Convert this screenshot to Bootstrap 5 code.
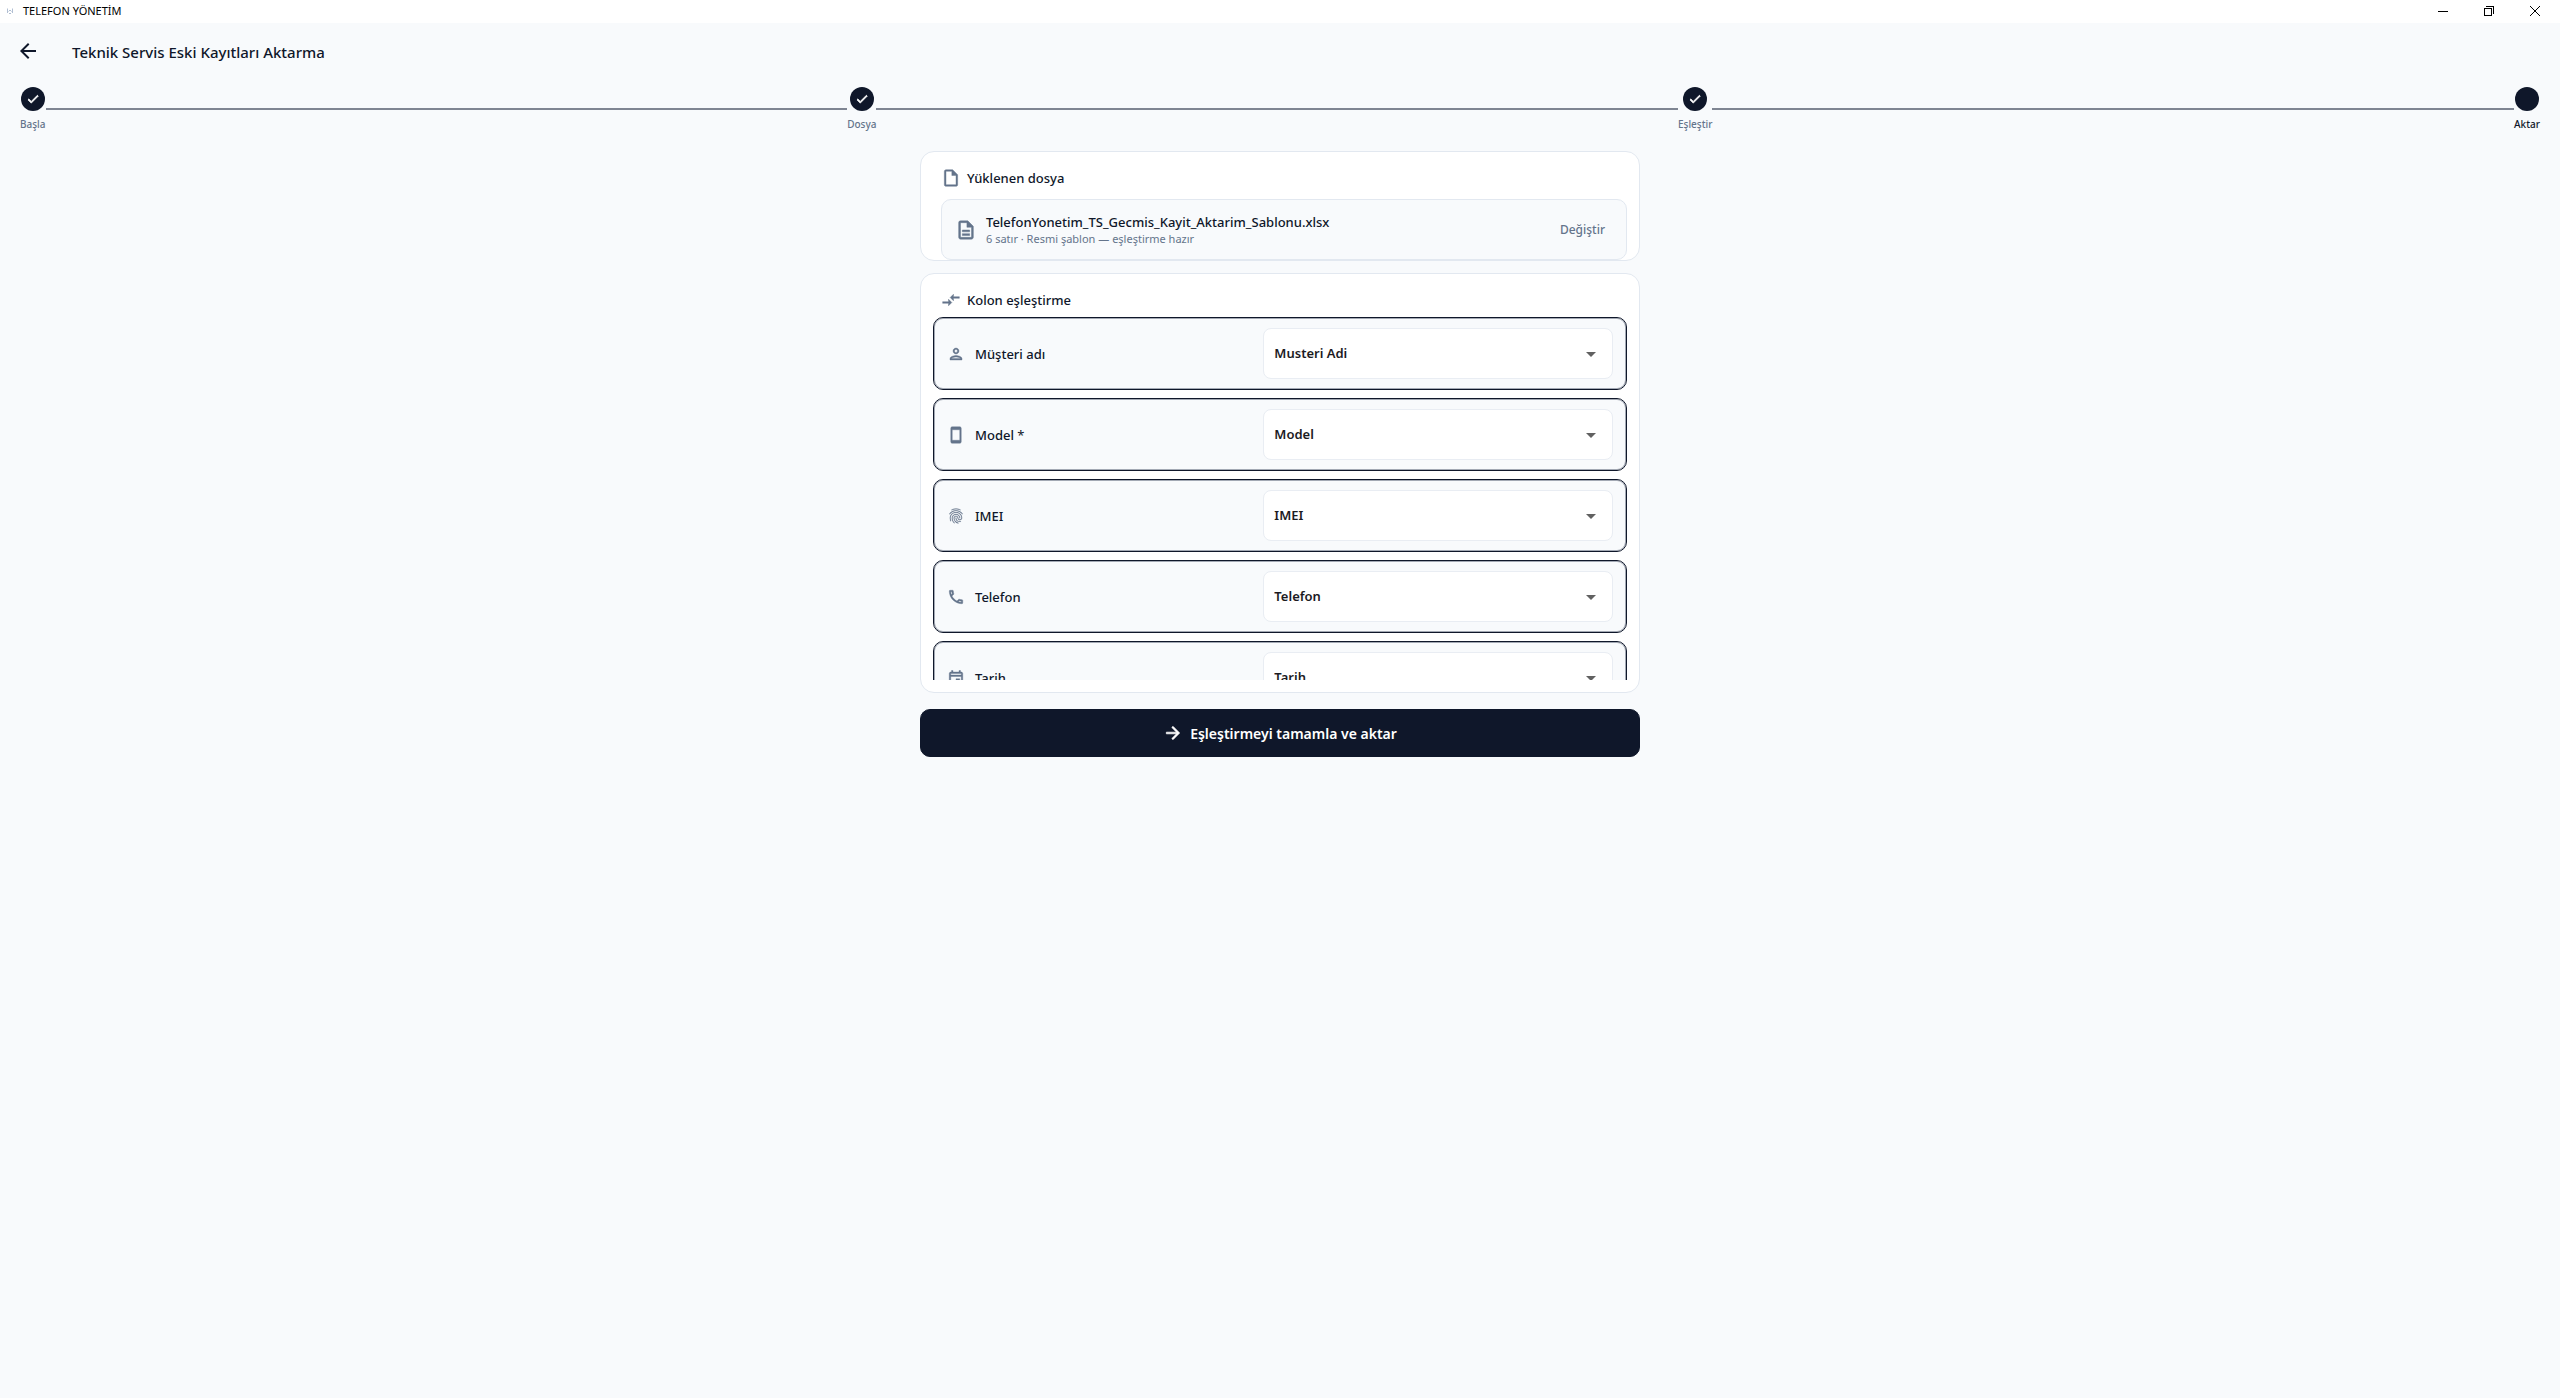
<!DOCTYPE html>
<html lang="tr">
<head>
<meta charset="utf-8">
<meta name="viewport" content="width=device-width, initial-scale=1">
<title>TELEFON YÖNETİM</title>
<link href="https://cdn.jsdelivr.net/npm/bootstrap@5.3.0/dist/css/bootstrap.min.css" rel="stylesheet">
<style>
  :root { --ink: #0f172a; --muted: #64748b; --line: #e2e8f0; --paper: #f8fafc; }
  body { background: var(--paper); color: var(--ink); font-family: "Noto Sans", "Open Sans", sans-serif; font-size: 13px; line-height: 20px; }
  svg { display: block; flex: none; fill: currentColor; }
  .window-bar { height: 23px; background: #fff; color: #000; font-size: 11px; line-height: 22px; padding: 0 2px 1px 7px; }
  .window-bar button { width: 46px; height: 21px; }
  .window-name { margin-left: 10px; }
  .app-mark { fill: none; stroke: #8fa3c0; }
  .plain-btn { border: 0; background: none; padding: 0; color: inherit; display: flex; align-items: center; justify-content: center; }
  .page-head { height: 56px; padding: 0 16px; gap: 32px; }
  .page-head h1 { font-size: 15px; line-height: 24px; font-weight: 500; margin: 0; padding-top: 2px; }
  .stepper { padding: 8px 20px 20px; }
  .step { font-size: 10px; line-height: 14px; font-weight: 500; gap: 6px; color: var(--muted); }
  .step.current { color: var(--ink); }
  .step-dot { width: 24px; height: 24px; border-radius: 50%; background: var(--ink); color: #fff; }
  .step-line { height: 2px; background: #7f8592; }
  .wizard { max-width: 720px; }
  .panel { background: #fff; border: 1px solid var(--line); border-radius: 14px; padding: 0 12px; }
  .panel + .panel { margin-top: 12px; }
  .panel h2 { font-size: 13px; line-height: 20px; font-weight: 500; margin: 0; }
  .panel-head { padding: 16px 0 0 8px; gap: 6px; }
  .panel-head svg, .file-box svg, .map-row svg { color: var(--muted); stroke: currentColor; stroke-width: .5px; }
  .map-row .fine-icon { stroke-width: .2px; }
  .file-box { margin: 11px 0 0 8px; padding: 0 21px 0 13px; height: 61px; border: 1px solid var(--line); border-radius: 10px; background: var(--paper); gap: 9px; }
  .file-name { font-weight: 500; line-height: 18px; }
  .file-note { font-size: 11px; line-height: 16px; color: var(--muted); }
  .file-box button { font-size: 12px; font-weight: 500; color: var(--muted); }
  .map-list { margin: 7px 0 12px; height: 363px; overflow: hidden; gap: 8px; }
  .map-row { flex: none; height: 73px; padding: 0 13px; border: 1px solid var(--ink); border-radius: 10px; background: var(--paper); box-shadow: inset 0 0 0 1px #a3a9b4; }
  .map-row label { margin-left: 10px; font-weight: 500; }
  .map-row .form-select { width: 52.5%; height: 51px; margin-left: auto; padding: 0 36px 0 10px; border: 1px solid #e9edf3; border-radius: 8px; color: #1c1b1f; font-size: 13px; font-weight: 600; background-color: #fff; background-position: right 9px center; background-size: 24px 24px;
    background-image: url("data:image/svg+xml,%3Csvg xmlns='http://www.w3.org/2000/svg' viewBox='0 0 24 24'%3E%3Cpath fill='%23616161' d='M7 10l5 5 5-5z'/%3E%3C/svg%3E"); }
  .go-btn { --bs-btn-bg: var(--ink); --bs-btn-border-color: var(--ink); --bs-btn-hover-bg: #1e293b; --bs-btn-color: #fff; --bs-btn-hover-color: #fff; height: 48px; border-radius: 10px; font-size: 14px; font-weight: 600; gap: 7px; }
</style>
</head>
<body>
<div class="window-bar d-flex align-items-center">
  <svg class="app-mark" width="6" height="6" viewBox="0 0 6 6" aria-hidden="true"><path d="M.5 .5v4.500M5.500 .5v4.500M1.500 3.500L3 2l1.500 1.500M2 5.500h2" stroke-width=".7"/></svg>
  <span class="window-name me-auto">TELEFON YÖNETİM</span>
  <button class="plain-btn" aria-label="Küçült"><svg width="10" height="10" viewBox="0 0 10 10"><path d="M0 5h10v1H0z"/></svg></button>
  <button class="plain-btn" aria-label="Geri yükle"><svg width="10" height="10" viewBox="0 0 10 10"><path d="M0 2h8v8H0zM1 3v6h6V3zM2 0h8v8H9V1H2z" fill-rule="evenodd"/></svg></button>
  <button class="plain-btn" aria-label="Kapat"><svg width="10" height="10" viewBox="0 0 10 10"><path d="M0 0l10 10M10 0L0 10" stroke="#000"/></svg></button>
</div>

<header class="page-head d-flex align-items-center">
  <button class="plain-btn" aria-label="Geri"><svg width="24" height="24" viewBox="0 0 24 24"><path d="M20 11H7.830l5.590-5.590L12 4l-8 8 8 8 1.410-1.410L7.830 13H20z"/></svg></button>
  <h1>Teknik Servis Eski Kayıtları Aktarma</h1>
</header>

<div class="stepper d-flex align-items-center">
  <div class="step d-flex flex-column align-items-center"><span class="step-dot d-flex align-items-center justify-content-center"><svg width="14" height="14" viewBox="0 0 24 24"><path d="M9 16.200L4.800 12l-1.400 1.400L9 19 21 7l-1.400-1.400z" stroke="#fff" stroke-width="1.500"/></svg></span>Başla</div>
  <div class="step-line flex-fill"></div>
  <div class="step d-flex flex-column align-items-center"><span class="step-dot d-flex align-items-center justify-content-center"><svg width="14" height="14" viewBox="0 0 24 24"><path d="M9 16.200L4.800 12l-1.400 1.400L9 19 21 7l-1.400-1.400z" stroke="#fff" stroke-width="1.500"/></svg></span>Dosya</div>
  <div class="step-line flex-fill"></div>
  <div class="step d-flex flex-column align-items-center"><span class="step-dot d-flex align-items-center justify-content-center"><svg width="14" height="14" viewBox="0 0 24 24"><path d="M9 16.200L4.800 12l-1.400 1.400L9 19 21 7l-1.400-1.400z" stroke="#fff" stroke-width="1.500"/></svg></span>Eşleştir</div>
  <div class="step-line flex-fill"></div>
  <div class="step current d-flex flex-column align-items-center"><span class="step-dot"></span>Aktar</div>
</div>

<main class="wizard mx-auto">
  <section class="panel">
    <div class="panel-head d-flex align-items-center">
      <svg width="20" height="20" viewBox="0 0 24 24"><path d="M14 2H6c-1.100 0-2 .9-2 2v16c0 1.100.9 2 2 2h12c1.100 0 2-.9 2-2V8zM6 20V4h7v5h5v11z"/></svg>
      <h2>Yüklenen dosya</h2>
    </div>
    <div class="file-box d-flex align-items-center">
      <svg width="22" height="22" viewBox="0 0 24 24"><path d="M8 16h8v2H8zm0-4h8v2H8zm6-10H6c-1.100 0-2 .9-2 2v16c0 1.100.9 2 2 2h12c1.100 0 2-.9 2-2V8zm4 18H6V4h7v5h5z"/></svg>
      <div class="me-auto">
        <div class="file-name">TelefonYonetim_TS_Gecmis_Kayit_Aktarim_Sablonu.xlsx</div>
        <div class="file-note">6 satır · Resmi şablon — eşleştirme hazır</div>
      </div>
      <button class="plain-btn">Değiştir</button>
    </div>
  </section>

  <section class="panel">
    <div class="panel-head d-flex align-items-center">
      <svg width="20" height="20" viewBox="0 0 24 24"><path d="M9.010 14H2v2h7.010v3L13 15l-3.990-4zm5.980-1v-3H22V8h-7.010V5L11 9z"/></svg>
      <h2>Kolon eşleştirme</h2>
    </div>
    <div class="map-list d-flex flex-column">
      <div class="map-row d-flex align-items-center">
        <svg width="18" height="18" viewBox="0 0 24 24"><path d="M12 6c1.100 0 2 .9 2 2s-.9 2-2 2-2-.9-2-2 .9-2 2-2m0 10c2.700 0 5.800 1.290 6 2H6c.23-.72 3.310-2 6-2m0-12C9.790 4 8 5.790 8 8s1.790 4 4 4 4-1.790 4-4-1.790-4-4-4zm0 10c-2.670 0-8 1.340-8 4v2h16v-2c0-2.660-5.330-4-8-4z"/></svg>
        <label for="m1">Müşteri adı</label>
        <select class="form-select" id="m1"><option>Musteri Adi</option></select>
      </div>
      <div class="map-row d-flex align-items-center">
        <svg width="18" height="18" viewBox="0 0 24 24"><path d="M17 1.010L7 1c-1.100 0-2 .9-2 2v18c0 1.100.9 2 2 2h10c1.100 0 2-.9 2-2V3c0-1.100-.9-1.990-2-1.990zM17 19H7V5h10z"/></svg>
        <label for="m2">Model <span class="fw-normal">*</span></label>
        <select class="form-select" id="m2"><option>Model</option></select>
      </div>
      <div class="map-row d-flex align-items-center">
        <svg class="fine-icon" width="18" height="18" viewBox="0 0 24 24"><path d="M17.810 4.470c-.08 0-.16-.02-.23-.06C15.660 3.420 14 3 12.010 3c-1.980 0-3.860.47-5.570 1.410-.24.13-.54.04-.68-.2-.13-.24-.04-.55.2-.68C7.820 2.520 9.860 2 12.010 2c2.130 0 3.990.47 6.030 1.520.25.13.34.43.21.67-.09.18-.26.28-.44.28zM3.500 9.720c-.1 0-.2-.03-.29-.09-.23-.16-.28-.47-.12-.7.99-1.400 2.250-2.500 3.750-3.270C9.980 4.040 14 4.030 17.150 5.650c1.500.77 2.760 1.860 3.750 3.250.16.22.11.54-.12.7-.23.16-.54.11-.7-.12-.9-1.260-2.040-2.250-3.390-2.940-2.870-1.470-6.540-1.470-9.400.01-1.360.7-2.500 1.700-3.400 2.960-.08.14-.23.21-.39.21zm6.250 12.070c-.13 0-.26-.05-.35-.15-.87-.87-1.340-1.430-2.010-2.640-.69-1.230-1.050-2.730-1.050-4.340 0-2.970 2.540-5.390 5.660-5.390s5.660 2.420 5.660 5.390c0 .28-.22.5-.5.5s-.5-.22-.5-.5c0-2.420-2.090-4.390-4.660-4.390-2.570 0-4.660 1.970-4.660 4.390 0 1.440.32 2.770.93 3.850.64 1.150 1.080 1.640 1.850 2.420.19.2.19.51 0 .71-.11.1-.24.15-.37.15zm7.170-1.850c-1.190 0-2.240-.3-3.100-.89-1.490-1.010-2.380-2.650-2.380-4.390 0-.28.22-.5.5-.5s.5.22.5.5c0 1.410.72 2.740 1.940 3.560.71.48 1.540.71 2.540.71.24 0 .64-.03 1.040-.1.27-.05.53.13.58.41.05.27-.13.53-.41.58-.57.11-1.070.12-1.210.12zM14.910 22c-.04 0-.09-.01-.13-.02-1.590-.44-2.630-1.030-3.720-2.100-1.400-1.390-2.170-3.240-2.170-5.220 0-1.620 1.380-2.940 3.080-2.940 1.700 0 3.080 1.320 3.080 2.940 0 1.070.93 1.940 2.080 1.940s2.080-.87 2.080-1.940c0-3.770-3.250-6.830-7.250-6.830-2.840 0-5.440 1.580-6.610 4.030-.39.81-.59 1.760-.59 2.800 0 .78.07 2.010.67 3.610.1.260-.03.55-.29.64-.26.1-.55-.04-.64-.29-.49-1.310-.73-2.610-.73-3.960 0-1.200.23-2.290.68-3.240 1.330-2.790 4.280-4.600 7.510-4.600 4.550 0 8.250 3.510 8.250 7.830 0 1.620-1.380 2.940-3.080 2.940s-3.080-1.320-3.080-2.940c0-1.070-.93-1.940-2.080-1.940s-2.080.87-2.080 1.940c0 1.710.66 3.310 1.870 4.510.95.94 1.860 1.460 3.270 1.850.27.07.42.35.35.61-.05.23-.26.38-.47.38z"/></svg>
        <label for="m3">IMEI</label>
        <select class="form-select" id="m3"><option>IMEI</option></select>
      </div>
      <div class="map-row d-flex align-items-center">
        <svg width="18" height="18" viewBox="0 0 24 24"><path d="M6.540 5c.06.89.21 1.760.45 2.590l-1.200 1.200c-.41-1.200-.67-2.470-.76-3.790h1.510m9.860 12.020c.85.24 1.720.39 2.600.45v1.490c-1.320-.09-2.590-.35-3.800-.75l1.200-1.190M7.500 3H4c-.55 0-1 .45-1 1 0 9.390 7.610 17 17 17 .55 0 1-.45 1-1v-3.490c0-.55-.45-1-1-1-1.240 0-2.450-.2-3.570-.57-.36-.12-.73-.05-1.020.24l-2.200 2.200c-2.830-1.450-5.150-3.760-6.590-6.590l2.200-2.200c.28-.28.36-.67.25-1.020C8.700 6.450 8.500 5.250 8.500 4c0-.55-.45-1-1-1z"/></svg>
        <label for="m4">Telefon</label>
        <select class="form-select" id="m4"><option>Telefon</option></select>
      </div>
      <div class="map-row d-flex align-items-center">
        <svg width="18" height="18" viewBox="0 0 24 24"><path d="M19 4h-1V2h-2v2H8V2H6v2H5c-1.110 0-1.990.9-1.990 2L3 20c0 1.100.89 2 2 2h14c1.100 0 2-.9 2-2V6c0-1.100-.9-2-2-2zm0 16H5V10h14zm0-12H5V6h14zm-7 5h5v5h-5z"/></svg>
        <label for="m5">Tarih</label>
        <select class="form-select" id="m5"><option>Tarih</option></select>
      </div>
    </div>
  </section>

  <button class="btn go-btn w-100 mt-3 d-flex align-items-center justify-content-center">
    <svg width="20" height="20" viewBox="0 0 24 24"><path d="M12 4l-1.410 1.410L16.170 11H4v2h12.170l-5.580 5.590L12 20l8-8z" stroke="#fff" stroke-width=".8"/></svg>
    Eşleştirmeyi tamamla ve aktar
  </button>
</main>
<script src="https://cdn.jsdelivr.net/npm/bootstrap@5.3.0/dist/js/bootstrap.bundle.min.js"></script>
</body>
</html>
